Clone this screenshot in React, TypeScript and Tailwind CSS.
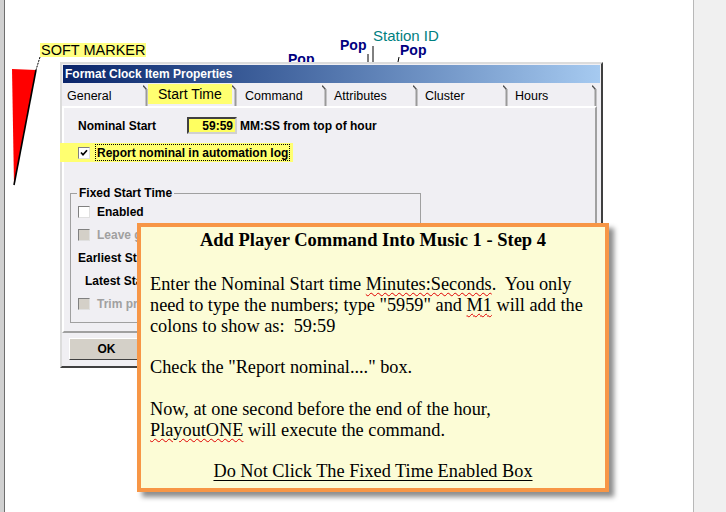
import React from "react";

const sans = { fontFamily: '"Liberation Sans", Arial, sans-serif' };
const serif = { fontFamily: '"Liberation Serif", "Times New Roman", serif' };

function CheckMark() {
  return (
    <svg width="8" height="8" viewBox="0 0 8 8">
      <path d="M1 3.5 L3 5.8 L7 1.2" stroke="#000" strokeWidth="1.7" fill="none" />
    </svg>
  );
}

function Box({ checked, disabled }: { checked?: boolean; disabled?: boolean }) {
  return (
    <div
      className={
        disabled
          ? "flex h-[12px] w-[12px] shrink-0 items-center justify-center border border-t-[#808080] border-l-[#808080] border-r-[#e0e0e0] border-b-[#e0e0e0] bg-[#d4d0c8]"
          : "flex h-[12px] w-[12px] shrink-0 items-center justify-center border border-t-[#808080] border-l-[#808080] border-r-[#e0e0e0] border-b-[#e0e0e0] bg-white"
      }
    >
      {checked ? <CheckMark /> : null}
    </div>
  );
}

function TabEdge() {
  return (
    <svg width="5" height="22" viewBox="0 0 5 22" className="shrink-0">
      <path d="M0 1.5 L3.5 5.5" stroke="#505050" strokeWidth="1.3" fill="none" />
      <rect x="2.5" y="5" width="2" height="17" fill="#9a9a9a" />
    </svg>
  );
}

const tabs = [
  { label: "General", w: "w-[86px]", pl: "pl-[5px]" },
  { label: "Start Time", w: "w-[89px]", pl: "pl-[10px]", selected: true },
  { label: "Command", w: "w-[90px]", pl: "pl-[8px]" },
  { label: "Attributes", w: "w-[91px]", pl: "pl-[7px]" },
  { label: "Cluster", w: "w-[90px]", pl: "pl-[7px]" },
  { label: "Hours", w: "w-[89px]", pl: "pl-[7px]" },
];

function Spell({ children }: { children: React.ReactNode }) {
  return (
    <span className="underline decoration-wavy decoration-[#e00000] decoration-1 underline-offset-[2px]">
      {children}
    </span>
  );
}

export default function App() {
  return (
    <div className="relative flex h-[512px] w-[726px] overflow-hidden bg-white" style={sans}>
      <div className="w-[4px] bg-[#d0d0d0]" />
      <div className="w-[1px] bg-[#6e6e6e]" />
      <div className="flex-1" />
      <div className="w-[33px] border-l border-[#b8b8b8] bg-[#f0f0f0]" />

      {/* soft marker */}
      <div className="absolute left-[40px] top-[43px] h-[14px] bg-[#ffff80] px-[1px] text-[14.5px] leading-[15px] text-black">
        SOFT MARKER
      </div>
      <svg className="absolute left-0 top-0" width="60" height="200" viewBox="0 0 60 200">
        <polygon points="12,69 36,70 14,185" fill="#ff0000" />
        <line x1="36" y1="70" x2="14" y2="185" stroke="#000" strokeWidth="1.6" />
        <line x1="40" y1="57" x2="36" y2="70" stroke="#000" strokeWidth="1" strokeDasharray="2 1" />
      </svg>

      {/* clock labels */}
      <div className="absolute left-[288px] top-[51px] text-[14px] font-bold leading-[16px] text-[#000080]">Pop</div>
      <div className="absolute left-[340px] top-[37px] text-[14px] font-bold leading-[16px] text-[#000080]">Pop</div>
      <div className="absolute left-[373px] top-[28px] text-[15px] leading-[16px] text-[#008080]">Station ID</div>
      <div className="absolute left-[400px] top-[42px] text-[14px] font-bold leading-[16px] text-[#000080]">Pop</div>
      <svg className="absolute left-[360px] top-[40px]" width="50" height="25" viewBox="0 0 50 25">
        <line x1="8" y1="14" x2="8" y2="22" stroke="#000" strokeWidth="1" />
        <line x1="13" y1="6" x2="13" y2="22" stroke="#000" strokeWidth="1" />
        <line x1="39" y1="17" x2="38" y2="22" stroke="#000" strokeWidth="1" />
      </svg>

      {/* dialog */}
      <div className="absolute left-[60px] top-[62px] flex h-[306px] w-[543px] flex-col border-2 border-t-[#dcdcdc] border-l-[#dcdcdc] border-r-[#404040] border-b-[#404040] bg-[#f0eff3]">
        <div className="mx-[1px] mt-[1px] flex h-[18px] items-center bg-gradient-to-r from-[#0a246a] to-[#a6caf0] pl-[2px] text-[12px] font-bold text-white">
          Format Clock Item Properties
        </div>
        <div className="mt-[1px] flex h-[22px] items-end">
          {tabs.map((t) => (
            <div key={t.label} className={`flex h-[22px] ${t.w}`}>
              <div
                className={
                  t.selected
                    ? `flex h-[20px] flex-1 items-center bg-[#ffff70] ${t.pl} text-[14px] text-black`
                    : `mt-[2px] flex h-[20px] flex-1 items-center ${t.pl} text-[12.5px] text-black`
                }
              >
                {t.label}
              </div>
              <TabEdge />
            </div>
          ))}
        </div>
        <div className="flex h-[227px] w-[535px] flex-col border-2 border-t-white border-l-white border-r-[#a0a0a0] border-b-[#a0a0a0]">
          <div className="mt-[9px] flex h-[17px] items-center whitespace-nowrap pl-[14px] text-[12px] font-bold text-black">
            <div className="w-[109px]">Nominal Start</div>
            <div className="flex h-[17px] w-[50px] items-center justify-end border-2 border-t-[#404040] border-l-[#404040] border-r-[#d0d0d0] border-b-[#d0d0d0] bg-[#ffff60] pr-[2px]">
              59:59
            </div>
            <div className="ml-[3px]">MM:SS from top of hour</div>
          </div>
          <div className="-ml-[4px] mt-[9px] flex h-[19px] w-fit items-center whitespace-nowrap bg-[#ffff70] pl-[18px] pr-[3px] text-[12px] font-bold text-black">
            <Box checked />
            <div className="ml-[5px] flex h-[17px] items-center border border-dotted border-black px-[1px]">
              Report nominal in automation log
            </div>
          </div>
          <fieldset className="ml-[6px] mt-[25px] w-[351px] border border-[#a0a0a0] pb-[7px] text-[12px] font-bold">
            <legend className="ml-[6px] px-[2px] leading-[13px] text-black">Fixed Start Time</legend>
            <div className="flex h-[23px] items-center pl-[7px]">
              <Box />
              <span className="ml-[7px] text-black">Enabled</span>
            </div>
            <div className="flex h-[23px] items-center pl-[7px]">
              <Box disabled />
              <span className="ml-[7px] text-[#a0a0a0]">Leave gap</span>
            </div>
            <div className="flex h-[23px] items-center pl-[7px] text-black">Earliest Start</div>
            <div className="flex h-[23px] items-center pl-[14px] text-black">Latest Start</div>
            <div className="flex h-[23px] items-center pl-[7px]">
              <Box disabled />
              <span className="ml-[7px] text-[#a0a0a0]">Trim previous</span>
            </div>
          </fieldset>
        </div>
        <div className="ml-[7px] mt-[5px] flex h-[22px] w-[75px] items-center justify-center border border-t-white border-l-white border-r-[#404040] border-b-[#404040] bg-[#d4d0c8] text-[12px] font-bold text-black">
          OK
        </div>
      </div>

      {/* callout */}
      <div
        className="absolute left-[137px] top-[223px] h-[269px] w-[472px] border-4 border-[#f79646] bg-[#fcfcd6] shadow-[5px_5px_5px_rgba(0,0,0,0.45)]"
        style={serif}
      >
        <div className="pt-[3px] text-center text-[18.5px] font-bold leading-[21px] text-black">
          Add Player Command Into Music 1 - Step 4
        </div>
        <div className="mt-[23px] whitespace-pre pl-[9px] text-[18.3px] leading-[20.8px] text-black">
          {"Enter the Nominal Start time "}
          <Spell>Minutes:Seconds</Spell>
          {".  You only"}
          <br />
          {'need to type the numbers; type "5959" and '}
          <Spell>M1</Spell>
          {" will add the"}
          <br />
          {"colons to show as:  59:59"}
          <br />
          <br />
          {'Check the "Report nominal...." box.'}
          <br />
          <br />
          {"Now, at one second before the end of the hour,"}
          <br />
          <Spell>PlayoutONE</Spell>
          {" will execute the command."}
          <br />
          <br />
          <div className="-ml-[9px] text-center">
            <span className="underline underline-offset-[3px]">Do Not Click The Fixed Time Enabled Box</span>
          </div>
        </div>
      </div>
    </div>
  );
}
